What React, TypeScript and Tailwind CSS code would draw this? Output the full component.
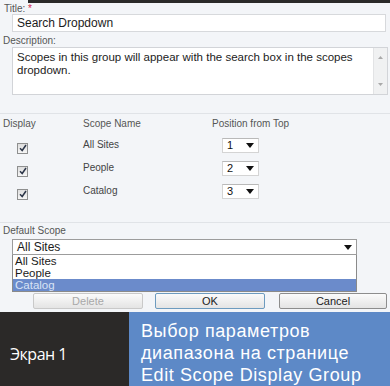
import type React from "react";

const font = "font-['Liberation_Sans',Arial,sans-serif]";

function Arrow({ className = "" }: { className?: string }) {
  return (
    <svg width="8" height="5" viewBox="0 0 8 5" className={className}>
      <path d="M0 0H8L4 5Z" fill="#111" />
    </svg>
  );
}

function Check() {
  return (
    <span className="flex w-[11px] h-[11px] items-center justify-center border border-[#8e8f8f] bg-gradient-to-b from-[#dedede] to-[#f6f6f6]">
      <svg width="8" height="8" viewBox="0 0 8 8">
        <path d="M1 4.2L3.2 6.5L7 1" fill="none" stroke="#2b3548" strokeWidth="1.5" />
      </svg>
    </span>
  );
}

function SmallSelect({ value }: { value: string }) {
  return (
    <div className="flex items-center justify-between w-[37px] h-[15px] bg-white border border-[#d4d4d4] border-t-[#b9b9b9] pl-[4px] pr-[4px] text-[11px] text-[#111]">
      <span>{value}</span>
      <Arrow />
    </div>
  );
}

function Button({ children, className = "" }: { children: React.ReactNode; className?: string }) {
  return (
    <button
      type="button"
      className={
        "h-[16px] flex items-center justify-center rounded-[2px] border text-[11px] leading-none bg-gradient-to-b from-[#fbfbfb] to-[#e4e4e4] " +
        className
      }
    >
      {children}
    </button>
  );
}

const rows = [
  { name: "All Sites", pos: "1" },
  { name: "People", pos: "2" },
  { name: "Catalog", pos: "3" },
];

export default function App() {
  return (
    <div className={"w-[390px] h-[386px] overflow-hidden bg-[#f3f5f8] flex flex-col " + font}>
      <div className="flex h-[3px]">
        <div className="w-[28px]" />
        <div className="flex-1 bg-[#2a2a2a]" />
      </div>

      <div className="h-[11px] leading-[11px] pl-[4px] text-[10px] text-[#555]">
        Title: <span className="text-[#d0264a]">*</span>
      </div>
      <div className="ml-[12px] w-[374px] h-[18px] bg-white border border-[#d7d9dc] flex items-center pl-[4px] text-[12px] text-[#1c1c1c]">
        Search Dropdown
      </div>

      <div className="mt-[2px] h-[13px] leading-[13px] pl-[3px] text-[10px] text-[#555]">
        Description:
      </div>
      <div className="ml-[12px] w-[376px] h-[49px] bg-white border border-[#d2d4d8] flex">
        <div className="flex-1 pl-[4px] pt-[3px] text-[11.5px] leading-[13px] text-[#1c1c1c]">
          Scopes in this group will appear with the search box in the scopes dropdown.
        </div>
        <div className="w-[14px] bg-[#f0f1f2] border-l border-[#e2e3e5] flex flex-col items-center justify-between py-[8px]">
          <svg width="5" height="3" viewBox="0 0 5 3">
            <path d="M0 3L2.5 0L5 3Z" fill="#a9a9a9" />
          </svg>
          <svg width="5" height="3" viewBox="0 0 5 3">
            <path d="M0 0H5L2.5 3Z" fill="#a9a9a9" />
          </svg>
        </div>
      </div>

      <div className="mt-[18px] h-px bg-[#e0e3e7]" />

      <div className="mt-[2px] h-[12px] grid grid-cols-[83px_129px_1fr] items-center text-[10px] text-[#555]">
        <span className="pl-[3px]">Display</span>
        <span>Scope Name</span>
        <span>Position from Top</span>
      </div>

      <div className="mt-[6px] flex flex-col">
        {rows.map((r) => (
          <div key={r.name} className="h-[23px] grid grid-cols-[83px_139px_1fr] items-center text-[10px] text-[#444]">
            <span className="pl-[17px] pt-[5px]">
              <Check />
            </span>
            <span className="-mt-[2px]">{r.name}</span>
            <SmallSelect value={r.pos} />
          </div>
        ))}
      </div>

      <div className="mt-[19px] h-px bg-[#e0e3e7]" />

      <div className="mt-[2px] h-[12px] leading-[12px] pl-[3px] text-[10px] text-[#555]">
        Default Scope
      </div>
      <div className="mt-[2px] ml-[12px] w-[345px] h-[16px] bg-white border border-[#9c9c9c] flex items-center justify-between pl-[4px] pr-[4px] text-[12px] text-[#1a1a1a]">
        <span>All Sites</span>
        <Arrow />
      </div>
      <div className="ml-[12px] w-[345px] h-[37px] bg-white border border-t-0 border-[#8a8a8a] flex flex-col text-[11.5px] text-[#1a1a1a]">
        <span className="h-[12px] leading-[12px] pl-[2px]">All Sites</span>
        <span className="h-[12px] leading-[12px] pl-[2px]">People</span>
        <span className="h-[12px] leading-[12px] pl-[2px] bg-[#6b8bcb] text-[#d9e3f5]">Catalog</span>
      </div>

      <div className="mt-[1px] ml-[33px] flex gap-[12px]">
        <Button className="w-[110px] border-[#c9c9c9] text-[#a8a8a8]">Delete</Button>
        <Button className="w-[110px] border-[#6d9bbf] text-[#222]">OK</Button>
        <Button className="ml-[2px] w-[108px] border-[#8d8d8d] text-[#222]">Cancel</Button>
      </div>

      <div className="mt-[3px] h-[74px] flex">
        <div className="w-[129px] bg-[#2b2928] pl-[10px] pt-[33px] text-[16px] leading-[18px] tracking-[-0.5px] text-white font-['Open_Sans',Arial,sans-serif]">
          Экран 1
        </div>
        <div className="flex-1 bg-[#5d89c7] pl-[12px] pt-[8px] text-[18px] leading-[22px] tracking-[0.6px] text-white">
          <div>Выбор параметров</div>
          <div>диапазона на странице</div>
          <div>Edit Scope Display Group</div>
        </div>
      </div>
    </div>
  );
}
